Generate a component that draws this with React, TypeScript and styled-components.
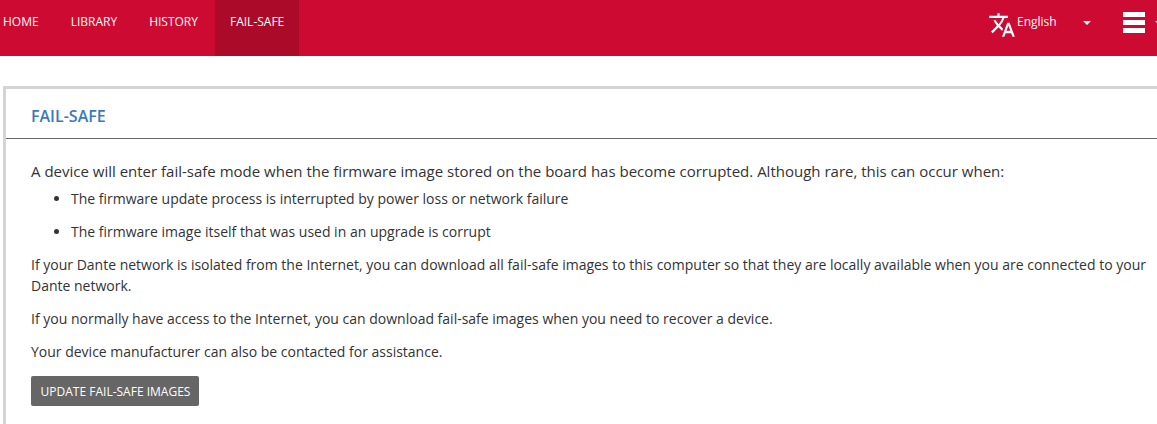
import styled, { createGlobalStyle } from "styled-components";
import { MdTranslate } from "react-icons/md";

const GlobalStyle = createGlobalStyle`
  html, body {
    margin: 0;
    padding: 0;
    background: #fff;
    overflow: hidden;
  }
  body {
    font-family: "Open Sans", "Liberation Sans", sans-serif;
    font-size: 14px;
    color: #333;
  }
`;

const navItems = ["HOME", "LIBRARY", "HISTORY", "FAIL-SAFE"];

export default function App() {
  return (
    <>
      <GlobalStyle />
      <Header>
        <Nav>
          {navItems.map((name) => (
            <NavItem key={name} $active={name === "FAIL-SAFE"}>
              {name}
            </NavItem>
          ))}
        </Nav>
        <HeaderRight>
          <LangIcon />
          <LangLabel>English</LangLabel>
          <Caret />
          <Burger>
            <BurgerBar />
            <BurgerBar />
            <BurgerBar />
          </Burger>
          <Caret />
        </HeaderRight>
      </Header>
      <Panel>
        <PanelHeader>
          <PanelTitle>FAIL-SAFE</PanelTitle>
        </PanelHeader>
        <PanelBody>
          <Intro>
            A device will enter fail-safe mode when the firmware image stored on the board has
            become corrupted. Although rare, this can occur when:
          </Intro>
          <Bullets>
            <li>The firmware update process is interrupted by power loss or network failure</li>
            <li>The firmware image itself that was used in an upgrade is corrupt</li>
          </Bullets>
          <Para>
            If your Dante network is isolated from the Internet, you can download all fail-safe
            images to this computer so that they are locally available when you are connected to
            your Dante network.
          </Para>
          <Para>
            If you normally have access to the Internet, you can download fail-safe images when you
            need to recover a device.
          </Para>
          <Para>Your device manufacturer can also be contacted for assistance.</Para>
          <UpdateButton>UPDATE FAIL-SAFE IMAGES</UpdateButton>
        </PanelBody>
      </Panel>
    </>
  );
}

const Header = styled.header`
  height: 56px;
  background: #cc0a32;
  display: flex;
  justify-content: space-between;
  color: #fff;
  overflow: hidden;
`;

const Nav = styled.nav`
  display: flex;
`;

const NavItem = styled.a<{ $active?: boolean }>`
  box-sizing: border-box;
  height: 56px;
  padding: 13px 16px 0;
  font-size: 12px;
  line-height: 17px;

  &:first-child {
    padding-left: 3px;
  }

  ${(p) =>
    p.$active &&
    `
    margin-left: 1px;
    padding: 13px 15px 0;
    background: #ab0a29;
  `}
`;

const HeaderRight = styled.div`
  display: flex;
  align-items: flex-start;
  margin-right: -6px;
`;

const LangIcon = styled(MdTranslate)`
  width: 28px;
  height: 28px;
  margin-top: 11px;
`;

const LangLabel = styled.span`
  font-size: 12px;
  line-height: 17px;
  margin: 13px 0 0 1px;
  width: 66px;
`;

const Caret = styled.span`
  width: 0;
  height: 0;
  margin-top: 21px;
  border-left: 4px solid transparent;
  border-right: 4px solid transparent;
  border-top: 4px solid #fff;
`;

const Burger = styled.div`
  display: flex;
  flex-direction: column;
  gap: 3px;
  width: 22px;
  margin: 12px 10px 0 32px;
`;

const BurgerBar = styled.span`
  height: 5px;
  background: #fff;
`;

const Panel = styled.section`
  margin: 30px 0 0 3px;
  padding-bottom: 18px;
  border-top: 3px solid #d4d4d4;
  border-left: 3px solid #d4d4d4;
`;

const PanelHeader = styled.div`
  height: 49px;
  padding-left: 25px;
  border-bottom: 1px solid #666;
`;

const PanelTitle = styled.h2`
  margin: 0;
  padding-top: 16px;
  font-size: 16px;
  line-height: 22px;
  font-weight: 560;
  color: #3a7ab8;
`;

const PanelBody = styled.div`
  padding: 22px 0 0 25px;
`;

const Intro = styled.p`
  margin: 0;
  font-size: 15px;
  line-height: 20px;
`;

const Bullets = styled.ul`
  margin: 8px 0 0;
  padding-left: 40px;
  font-size: 14px;
  line-height: 20px;

  li + li {
    margin-top: 13px;
  }
`;

const Para = styled.p`
  margin: 12px 0 0;
  font-size: 14px;
  line-height: 21px;
`;

const UpdateButton = styled.button`
  display: block;
  margin-top: 14px;
  height: 30px;
  width: 168px;
  padding: 0 0 0 1px;
  border: 0;
  border-radius: 2px;
  background: #666;
  color: #fff;
  font-family: inherit;
  font-size: 12px;
`;
